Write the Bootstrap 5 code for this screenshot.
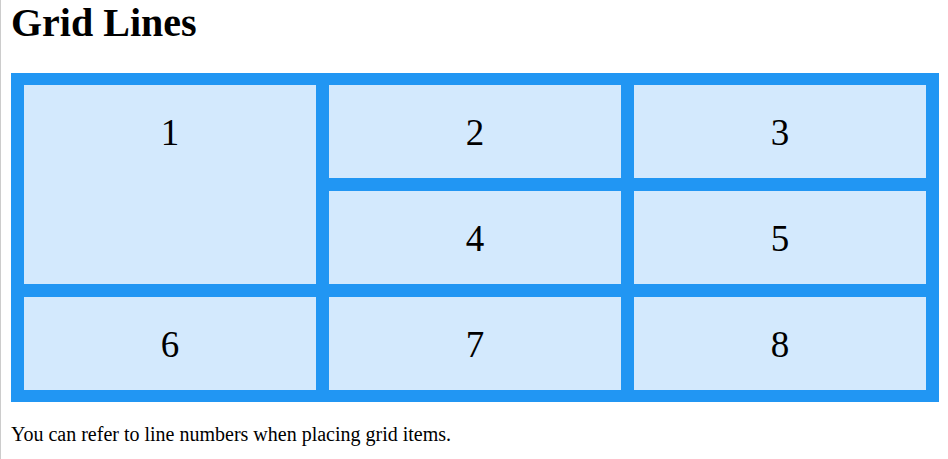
<!DOCTYPE html>
<html lang="en">
<head>
<meta charset="utf-8">
<meta name="viewport" content="width=device-width, initial-scale=1">
<title>Grid Lines</title>
<link href="https://cdn.jsdelivr.net/npm/bootstrap@5.3.0/dist/css/bootstrap.min.css" rel="stylesheet">
<style>
body { font-family: "Liberation Serif", "Times New Roman", serif; color: #000; border-left: 1px solid #ccc; min-height: 100vh; }
.page { padding: 0 9px 0 10px; }
.page-title { font-size: 40px; line-height: 46px; margin-bottom: 27px; }
.grid-box { grid-template-columns: repeat(3, 1fr); gap: 13px; padding: 12px 13px; background: #2196f3; }
.grid-cell { background: #d3e9fd; font-size: 37px; line-height: 43px; padding: 26px 0 24px; }
.tall { grid-row: 1 / 3; }
.note { font-size: 20px; line-height: 24px; margin-top: 20px; }
</style>
<script src="https://cdn.jsdelivr.net/npm/bootstrap@5.3.0/dist/js/bootstrap.bundle.min.js" defer></script>
</head>
<body>
<main class="page">
  <h1 class="page-title fw-bold">Grid Lines</h1>
  <div class="grid-box d-grid text-center">
    <div class="grid-cell tall">1</div>
    <div class="grid-cell">2</div>
    <div class="grid-cell">3</div>
    <div class="grid-cell">4</div>
    <div class="grid-cell">5</div>
    <div class="grid-cell">6</div>
    <div class="grid-cell">7</div>
    <div class="grid-cell">8</div>
  </div>
  <p class="note mb-0">You can refer to line numbers when placing grid items.</p>
</main>
</body>
</html>
